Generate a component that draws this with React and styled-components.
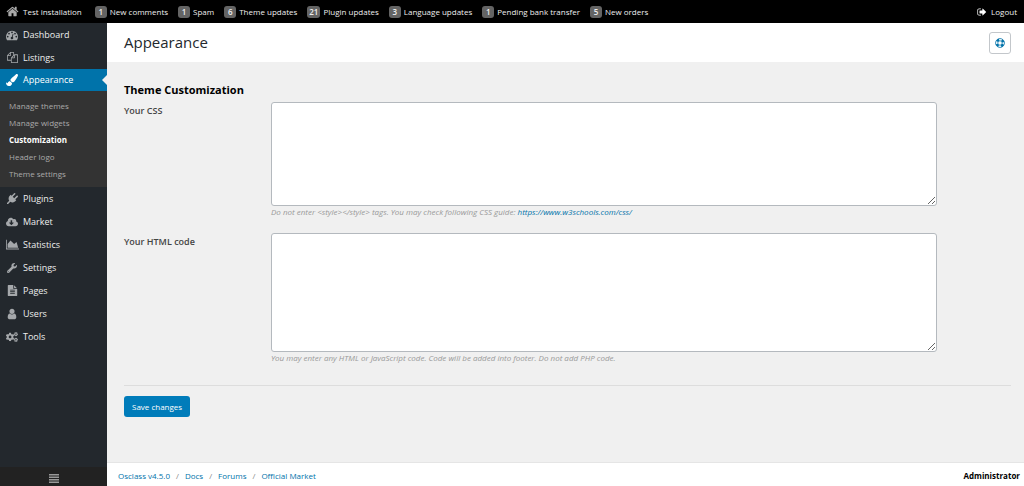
import React from 'react';
import styled, { createGlobalStyle, css } from 'styled-components';
import { FaPaintBrush, FaCloudDownloadAlt, FaWrench, FaCogs } from 'react-icons/fa';

const GlobalStyle = createGlobalStyle`
  * { box-sizing: border-box; }
  body {
    margin: 0;
    background: #f0f0f0;
    color: #444;
    font-family: "Segoe UI", "Open Sans", "Noto Sans", sans-serif;
    font-size: 8px;
    line-height: 12px;
  }
  a { text-decoration: none; }
  ul { list-style: none; margin: 0; padding: 0; }
`;

const Page = styled.div`
  min-height: 100vh;
  display: flex;
  flex-direction: column;
`;

const TopBar = styled.header`
  display: flex;
  align-items: center;
  height: 23px;
  padding: 0 7px 0 6px;
  background: #000;
`;

const TopLink = styled.a`
  display: flex;
  align-items: center;
  gap: 4px;
  color: #eee;
  white-space: nowrap;
  svg { color: ${(p) => (p.$bright ? '#fff' : '#aaa')}; }
`;

const Counters = styled.nav`
  display: flex;
  flex: 1;
  gap: 10px;
  margin-left: 13px;
`;

const Counter = styled(TopLink)`
  gap: 3px;
`;

const Badge = styled.span`
  min-width: 12px;
  padding: 0 2px;
  border-radius: 3px;
  background: #646464;
  font-weight: 600;
  text-align: center;
`;

const Body = styled.div`
  display: flex;
  flex: 1;
`;

const Sidebar = styled.nav`
  display: flex;
  flex-direction: column;
  flex: 0 0 107px;
  background: #23282d;
`;

const Menu = styled.ul`
  flex: 1;
`;

const MenuLink = styled.a`
  position: relative;
  display: flex;
  align-items: center;
  gap: 5px;
  height: 23px;
  padding-left: 6px;
  font-size: 9px;
  color: #eee;
  ${(p) => p.$active && css`
    height: 22px;
    background: #0073aa;
    color: #fff;
    &::after {
      content: "";
      position: absolute;
      right: 0;
      border: 5px solid transparent;
      border-right-color: #f0f0f0;
      border-left-width: 0;
    }
  `}
`;

const MenuIcon = styled.span`
  display: grid;
  place-items: center;
  width: 12px;
  color: ${(p) => (p.$active ? '#fff' : '#a5a8ab')};
`;

const SubMenu = styled.ul`
  padding: 6px 0 5px;
  background: #333;
`;

const SubLink = styled.a`
  display: block;
  padding-left: 9px;
  line-height: 17px;
  color: ${(p) => (p.$current ? '#fff' : '#aaa')};
  font-weight: ${(p) => (p.$current ? 700 : 400)};
`;

const Collapse = styled.button`
  display: flex;
  align-items: center;
  justify-content: center;
  height: 19px;
  padding: 3px 0 0;
  border: 0;
  background: #222;
  color: #999;
`;

const Main = styled.div`
  display: flex;
  flex-direction: column;
  flex: 1;
  min-width: 0;
`;

const Heading = styled.div`
  display: flex;
  align-items: center;
  justify-content: space-between;
  height: 39px;
  padding: 0 13px 0 17px;
  background: #fff;
`;

const Title = styled.h1`
  margin: 0;
  padding-bottom: 2px;
  font-size: 15px;
  line-height: 22px;
  font-weight: 400;
  color: #23282d;
`;

const HelpButton = styled.button`
  display: grid;
  place-items: center;
  width: 22px;
  height: 22px;
  padding: 0;
  border: 1px solid #c3c7cb;
  border-radius: 3px;
  background: #fff;
  color: #0073aa;
`;

const Form = styled.form`
  flex: 1;
  padding: 20px 13px 24px 17px;
`;

const SectionTitle = styled.h2`
  margin: 0 0 5px;
  font-size: 11px;
  line-height: 15px;
  color: #000;
`;

const Field = styled.div`
  display: grid;
  grid-template-columns: 147px minmax(0, 1fr);
  margin-bottom: 15px;
`;

const FieldLabel = styled.label`
  padding-top: 3px;
  font-size: 9px;
  font-weight: 600;
`;

const Control = styled.div`
  width: 90%;
`;

const CodeArea = styled.textarea`
  display: block;
  width: 100%;
  height: ${(p) => p.$height};
  border: 1px solid #b4b9be;
  border-radius: 3px;
  background: #fff;
  font-family: "Liberation Mono", monospace;
  font-size: 9px;
  outline: 0;
`;

const Hint = styled.p`
  margin: 0;
  font-style: italic;
  color: #999;
  a { color: #0073aa; }
`;

const Actions = styled.div`
  margin-top: 21px;
  padding-top: 10px;
  border-top: 1px solid #ddd;
`;

const SaveButton = styled.button`
  height: 21px;
  padding: 0 8px;
  border: 0;
  border-radius: 3px;
  background: #007cba;
  color: #fff;
  font: inherit;
`;

const Footer = styled.footer`
  display: flex;
  align-items: center;
  justify-content: space-between;
  height: 24px;
  padding: 3px 4px 0 11px;
  border-top: 1px solid #e5e5e5;
  background: #fff;
  strong { color: #000; }
`;

const FooterLinks = styled.nav`
  display: flex;
  gap: 6px;
  color: #888;
  a { color: #0073aa; }
`;

const Icon = ({ d, size = 12, box = '0 0 1792 1792' }) => (
  <svg width={size} height={size} viewBox={box} fill="currentColor" aria-hidden="true">
    <path d={d} />
  </svg>
);

const paths = {
  home: 'M1472 992v480q0 26-19 45t-45 19h-384v-384h-256v384h-384q-26 0-45-19t-19-45v-480q0-1 .5-3t.5-3l575-474 575 474q1 2 1 6zm223-69l-62 74q-8 9-21 11h-3q-13 0-21-7l-692-577-692 577q-12 8-24 7-13-2-21-11l-62-74q-8-10-7-23.5t11-21.5l719-599q32-26 76-26t76 26l244 204v-195q0-14 9-23t23-9h192q14 0 23 9t9 23v408l219 182q10 8 11 21.5t-7 23.5z',
  dashboard: 'M384 1152q0-53-37.5-90.5t-90.5-37.5-90.5 37.5-37.5 90.5 37.5 90.5 90.5 37.5 90.5-37.5 37.5-90.5zm192-448q0-53-37.5-90.5t-90.5-37.5-90.5 37.5-37.5 90.5 37.5 90.5 90.5 37.5 90.5-37.5 37.5-90.5zm428 481l101-382q6-26-7.5-48.5t-38.5-29.5-48 6.5-30 39.5l-101 382q-60 5-107 43.5t-63 98.5q-20 77 20 146t117 89 146-20 89-117q16-60-6-117t-72-91zm660-33q0-53-37.5-90.5t-90.5-37.5-90.5 37.5-37.5 90.5 37.5 90.5 90.5 37.5 90.5-37.5 37.5-90.5zm-640-640q0-53-37.5-90.5t-90.5-37.5-90.5 37.5-37.5 90.5 37.5 90.5 90.5 37.5 90.5-37.5 37.5-90.5zm448 192q0-53-37.5-90.5t-90.5-37.5-90.5 37.5-37.5 90.5 37.5 90.5 90.5 37.5 90.5-37.5 37.5-90.5zm320 448q0 261-141 483-19 29-54 29h-1402q-35 0-54-29-141-221-141-483 0-182 71-348t191-286 286-191 348-71 348 71 286 191 191 286 71 348z',
  files: 'M1696 384q40 0 68 28t28 68v1216q0 40-28 68t-68 28h-960q-40 0-68-28t-28-68v-288h-544q-40 0-68-28t-28-68v-672q0-40 20-88t48-76l408-408q28-28 76-48t88-20h416q40 0 68 28t28 68v328q68-40 128-40h416zm-544 213l-299 299h299v-299zm-640-384l-299 299h299v-299zm196 647l316-316v-416h-384v416q0 40-28 68t-68 28h-416v640h512v-256q0-40 20-88t48-76zm956 804v-1152h-384v416q0 40-28 68t-68 28h-416v640h896z',
  plug: 'M1755 453q37 38 37 90.5t-37 90.5l-401 400 150 150-160 160q-163 163-389.5 186.5t-411.5-100.5l-362 362h-181v-181l362-362q-124-185-100.5-411.5t186.5-389.5l160-160 150 150 400-401q38-37 91-37t90 37 37 90.5-37 90.5l-400 401 234 234 401-400q38-37 91-37t90 37z',
  chart: 'M2048 1536v128h-2048v-1536h128v1408h1920zm-384-1024l256 896h-1664v-576l448-576 576 576z',
  file: 'M1596 476q14 14 28 36h-472v-472q22 14 36 28zm-476 164h544v1056q0 40-28 68t-68 28h-1344q-40 0-68-28t-28-68v-1600q0-40 28-68t68-28h800v544q0 40 28 68t68 28zm160 736v-64q0-14-9-23t-23-9h-704q-14 0-23 9t-9 23v64q0 14 9 23t23 9h704q14 0 23-9t9-23zm0-256v-64q0-14-9-23t-23-9h-704q-14 0-23 9t-9 23v64q0 14 9 23t23 9h704q14 0 23-9t9-23zm0-256v-64q0-14-9-23t-23-9h-704q-14 0-23 9t-9 23v64q0 14 9 23t23 9h704q14 0 23-9t9-23z',
  user: 'M1536 1399q0 109-62.5 187t-150.5 78h-854q-88 0-150.5-78t-62.5-187q0-85 8.5-160.5t31.5-152 58.5-131 94-89 134.5-34.5q131 128 313 128t313-128q76 0 134.5 34.5t94 89 58.5 131 31.5 152 8.5 160.5zm-256-887q0 159-112.5 271.5t-271.5 112.5-271.5-112.5-112.5-271.5 112.5-271.5 271.5-112.5 271.5 112.5 112.5 271.5z',
  signOut: 'M704 1440q0 4 1 20t.5 26.5-3 23.5-10 19.5-20.5 6.5h-320q-119 0-203.5-84.5t-84.5-203.5v-704q0-119 84.5-203.5t203.5-84.5h320q13 0 22.5 9.5t9.5 22.5q0 4 1 20t.5 26.5-3 23.5-10 19.5-20.5 6.5h-320q-66 0-113 47t-47 113v704q0 66 47 113t113 47h312l11.5 1 11.5 3 8 5.5 7 9 2 13.5zm928-544q0 26-19 45l-544 544q-19 19-45 19t-45-19-19-45v-288h-448q-26 0-45-19t-19-45v-384q0-26 19-45t45-19h448v-288q0-26 19-45t45-19 45 19l544 544q19 19 19 45z',
};

const LifeRing = () => (
  <svg width="10" height="10" viewBox="0 0 18 18" fill="none" stroke="currentColor" aria-hidden="true">
    <circle cx="9" cy="9" r="8" strokeWidth="1.4" />
    <circle cx="9" cy="9" r="4" strokeWidth="1.4" />
    <circle cx="9" cy="9" r="6" strokeWidth="4" strokeDasharray="4.7 4.725" strokeDashoffset="-2.36" />
  </svg>
);

const Bars = () => (
  <svg width="10" height="9" viewBox="0 0 10 9" fill="currentColor" aria-hidden="true">
    <path d="M0 0h10v1.5H0zM0 2.5h10V4H0zM0 5h10v1.5H0zM0 7.5h10V9H0z" />
  </svg>
);

const counters = [
  [1, 'New comments'],
  [1, 'Spam'],
  [6, 'Theme updates'],
  [21, 'Plugin updates'],
  [3, 'Language updates'],
  [1, 'Pending bank transfer'],
  [5, 'New orders'],
];

const menu = [
  { label: 'Dashboard', icon: <Icon d={paths.dashboard} /> },
  { label: 'Listings', icon: <Icon d={paths.files} size={11} /> },
  {
    label: 'Appearance',
    icon: <FaPaintBrush size={12} />,
    active: true,
    items: ['Manage themes', 'Manage widgets', 'Customization', 'Header logo', 'Theme settings'],
  },
  { label: 'Plugins', icon: <Icon d={paths.plug} size={11} /> },
  { label: 'Market', icon: <FaCloudDownloadAlt size={12} /> },
  { label: 'Statistics', icon: <Icon d={paths.chart} size={13} box="0 0 2048 1792" /> },
  { label: 'Settings', icon: <FaWrench size={10} /> },
  { label: 'Pages', icon: <Icon d={paths.file} size={11} /> },
  { label: 'Users', icon: <Icon d={paths.user} /> },
  { label: 'Tools', icon: <FaCogs size={12} /> },
];

export default function App() {
  return (
    <Page>
      <GlobalStyle />
      <TopBar>
        <TopLink href="#"><Icon d={paths.home} size={13} />Test installation</TopLink>
        <Counters aria-label="Notifications">
          {counters.map(([count, label]) => (
            <Counter href="#" key={label}><Badge>{count}</Badge>{label}</Counter>
          ))}
        </Counters>
        <TopLink href="#" $bright><Icon d={paths.signOut} size={10} />Logout</TopLink>
      </TopBar>
      <Body>
        <Sidebar aria-label="Main menu">
          <Menu>
            {menu.map(({ label, icon, active, items }) => (
              <li key={label}>
                <MenuLink href="#" $active={active}>
                  <MenuIcon $active={active}>{icon}</MenuIcon>
                  {label}
                </MenuLink>
                {items && (
                  <SubMenu>
                    {items.map((item) => (
                      <li key={item}><SubLink href="#" $current={item === 'Customization'}>{item}</SubLink></li>
                    ))}
                  </SubMenu>
                )}
              </li>
            ))}
          </Menu>
          <Collapse type="button" aria-label="Collapse menu"><Bars /></Collapse>
        </Sidebar>
        <Main>
          <Heading>
            <Title>Appearance</Title>
            <HelpButton type="button" aria-label="Help"><LifeRing /></HelpButton>
          </Heading>
          <Form>
            <SectionTitle>Theme Customization</SectionTitle>
            <Field>
              <FieldLabel htmlFor="css">Your CSS</FieldLabel>
              <Control>
                <CodeArea id="css" $height="104px" />
                <Hint>
                  {'Do not enter <style></style> tags. You may check following CSS guide: '}
                  <a href="#css-guide">https://www.w3schools.com/css/</a>
                </Hint>
              </Control>
            </Field>
            <Field>
              <FieldLabel htmlFor="html">Your HTML code</FieldLabel>
              <Control>
                <CodeArea id="html" $height="119px" />
                <Hint>You may enter any HTML or JavaScript code. Code will be added into footer. Do not add PHP code.</Hint>
              </Control>
            </Field>
            <Actions>
              <SaveButton type="button">Save changes</SaveButton>
            </Actions>
          </Form>
          <Footer>
            <FooterLinks aria-label="Footer">
              <a href="#">Osclass v4.5.0</a>
              <span>/</span>
              <a href="#">Docs</a>
              <span>/</span>
              <a href="#">Forums</a>
              <span>/</span>
              <a href="#">Official Market</a>
            </FooterLinks>
            <strong>Administrator</strong>
          </Footer>
        </Main>
      </Body>
    </Page>
  );
}
